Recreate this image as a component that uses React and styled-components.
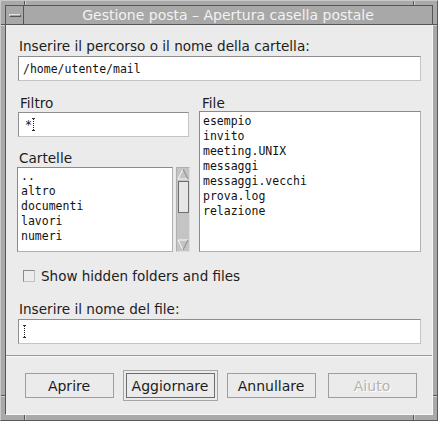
import React from "react";
import styled, { createGlobalStyle, css } from "styled-components";

const GlobalStyle = createGlobalStyle`
  html, body { margin: 0; padding: 0; background: #a9a9a9; }
  body { font-family: "DejaVu Sans", "Liberation Sans", sans-serif; }
  * { box-sizing: border-box; }
`;

const DARK = "#565656";
const LIGHT = "#d2d2d2";

const Window = styled.div`
  position: relative;
  width: 438px;
  height: 421px;
  background: #a9a9a9;
  border: 1px solid;
  border-color: #c8c8c8 #5a5a5a #5a5a5a #c8c8c8;
  padding: 4px 4px 5px 4px;
  display: flex;
  flex-direction: column;
`;

const Tick = styled.span`
  position: absolute;
  background: ${DARK};
  box-shadow: ${(p) => (p.$vertical ? `1px 0 0 ${LIGHT}` : `0 1px 0 ${LIGHT}`)};
  ${(p) =>
    p.$vertical
      ? css`width: 1px; height: ${p.$len}px;`
      : css`height: 1px; width: ${p.$len}px;`}
`;

const TitleBar = styled.div`
  display: flex;
  height: 20px;
  border: 1px solid ${DARK};
  background: #a8a8a8;
`;

const MenuButton = styled.div`
  width: 18px;
  border-right: 1px solid ${DARK};
  display: flex;
  align-items: center;
  justify-content: center;
`;

const MenuBar = styled.span`
  display: block;
  width: 12px;
  height: 3px;
  background: #a4a4a4;
  border: 1px solid;
  border-color: #e2e2e2 ${DARK} ${DARK} #e2e2e2;
  margin-top: 1px;
`;

const Title = styled.div`
  flex: 1;
  text-align: center;
  color: #f2f2f2;
  font-size: 14px;
  line-height: 18px;
  white-space: nowrap;
`;

const Content = styled.div`
  flex: 1;
  display: flex;
  flex-direction: column;
  background: #ebebeb;
  border-left: 1px solid ${DARK};
  border-right: 1px solid #f6f6f6;
  border-bottom: 1px solid #f6f6f6;
`;

const Body = styled.div`
  display: flex;
  flex-direction: column;
  padding: 13px 11px 0 12px;
`;

const Label = styled.div`
  font-size: 13.6px;
  line-height: 16px;
  color: #1c1c1c;
  padding-left: ${(p) => p.$indent ?? 1}px;
  margin-top: ${(p) => p.$mt ?? 0}px;
  margin-bottom: ${(p) => p.$mb ?? 2}px;
  white-space: nowrap;
`;

const Field = styled.div`
  height: 25px;
  width: ${(p) => (p.$w ? `${p.$w}px` : "100%")};
  background: #ffffff;
  border: 1px solid;
  border-color: #8e8e8e #c4c4c4 #c4c4c4 #8e8e8e;
  padding: 0 0 0 ${(p) => p.$pl ?? 4}px;
  display: flex;
  align-items: center;
  font-family: "DejaVu Sans Mono", "Liberation Mono", monospace;
  font-size: 11.5px;
  color: #111;
  white-space: pre;
`;

const Caret = styled.span`
  position: relative;
  display: inline-block;
  width: 3px;
  height: 13px;
  margin-left: ${(p) => p.$ml ?? 0}px;
  &::before {
    content: "";
    position: absolute;
    left: 1px;
    top: 1px;
    bottom: 1px;
    border-left: 1px dotted #222;
  }
  &::after {
    content: "";
    position: absolute;
    left: 0;
    right: 0;
    top: 0;
    bottom: 0;
    border-top: 1px solid #333;
    border-bottom: 1px solid #333;
  }
`;

const Columns = styled.div`
  display: grid;
  grid-template-columns: 172px 222px;
  column-gap: 9px;
  margin-top: 14px;
`;

const Column = styled.div`
  display: flex;
  flex-direction: column;
`;

const ListRow = styled.div`
  display: flex;
  gap: 3px;
  margin-left: -1px;
`;

const List = styled.div`
  flex: 1;
  height: ${(p) => p.$h}px;
  background: #ffffff;
  border: 1px solid;
  border-color: #8a8a8a #b0b0b0 #b0b0b0 #8a8a8a;
  padding: ${(p) => p.$pt}px 0 0 3px;
  font-family: "DejaVu Sans Mono", "Liberation Mono", monospace;
  font-size: 11.5px;
  line-height: 15px;
  color: #111;
  overflow: hidden;
`;

const Item = styled.div`
  white-space: pre;
`;

const Scrollbar = styled.div`
  width: 14px;
  height: 85px;
  background: #c4c4c4;
  border: 1px solid;
  border-color: #b0b0b0 #dedede #dedede #b0b0b0;
  display: flex;
  flex-direction: column;
  align-items: center;
`;

const Arrow = styled.svg`
  display: block;
  flex: none;
`;

const Thumb = styled.div`
  width: 11px;
  height: 32px;
  margin-top: 1px;
  background: #e6e6e6;
  border: 1px solid #6e6e6e;
`;

const Trough = styled.div`
  flex: 1;
`;

const CheckRow = styled.div`
  display: flex;
  align-items: center;
  gap: 6px;
  margin-top: 16px;
  padding-left: 5px;
  height: 16px;
`;

const CheckBox = styled.span`
  width: 12px;
  height: 12px;
  background: #ececec;
  border: 1px solid;
  border-color: #8a8a8a #c0c0c0 #c0c0c0 #8a8a8a;
`;

const CheckLabel = styled.span`
  font-size: 13.5px;
  line-height: 16px;
  color: #1c1c1c;
`;

const Separator = styled.div`
  margin-top: 11px;
  height: 2px;
  border-top: 1px solid #9a9a9a;
  border-bottom: 1px solid #f8f8f8;
`;

const ButtonBar = styled.div`
  flex: 1;
  display: flex;
  justify-content: center;
  align-items: flex-start;
  gap: 12px;
  padding-top: 16px;
  padding-left: 3px;
`;

const DefaultRing = styled.div`
  margin: -3px;
  padding: 2px;
  border: 1px solid #a6a6a6;
`;

const Button = styled.button`
  width: 89px;
  height: 25px;
  margin: 0;
  padding: 0;
  background: #ebebeb;
  border: 1px solid ${(p) => (p.$default ? "#6c6c6c" : "#9e9e9e")};
  font-family: "DejaVu Sans", "Liberation Sans", sans-serif;
  font-size: 14px;
  color: ${(p) => (p.disabled ? "#b4b4b4" : "#1c1c1c")};
  text-shadow: ${(p) => (p.disabled ? "1px 1px 0 #ffffff" : "none")};
  cursor: default;
`;

const UpArrow = () => (
  <Arrow width="12" height="12" viewBox="0 0 12 12">
    <polygon points="1,11 6,1 11,11" fill="#c4c4c4" />
    <polyline points="1,11 6,1" fill="none" stroke="#fafafa" strokeWidth="1" />
    <polyline points="1,11 11,11" fill="none" stroke="#fafafa" strokeWidth="1" />
    <polyline points="6,1 11,11" fill="none" stroke="#8a8a8a" strokeWidth="1" />
  </Arrow>
);

const DownArrow = () => (
  <Arrow width="12" height="12" viewBox="0 0 12 12">
    <polygon points="1,1 11,1 6,11" fill="#c4c4c4" />
    <polyline points="1,1 11,1" fill="none" stroke="#fafafa" strokeWidth="1" />
    <polyline points="1,1 6,11" fill="none" stroke="#fafafa" strokeWidth="1" />
    <polyline points="11,1 6,11" fill="none" stroke="#8a8a8a" strokeWidth="1" />
  </Arrow>
);

const folders = ["..", "altro", "documenti", "lavori", "numeri"];
const files = [
  "esempio",
  "invito",
  "meeting.UNIX",
  "messaggi",
  "messaggi.vecchi",
  "prova.log",
  "relazione",
];

const ticks = [
  { v: true, len: 4, top: 0, left: 23 },
  { v: true, len: 4, top: 0, left: 412 },
  { v: true, len: 5, top: 414, left: 23 },
  { v: true, len: 5, top: 414, left: 412 },
  { v: false, len: 4, top: 23, left: 0 },
  { v: false, len: 4, top: 23, left: 432 },
  { v: false, len: 4, top: 394, left: 0 },
  { v: false, len: 4, top: 394, left: 432 },
];

export default function App() {
  return (
    <>
      <GlobalStyle />
      <Window>
        {ticks.map((t, i) => (
          <Tick key={i} $vertical={t.v} $len={t.len} style={{ top: t.top, left: t.left }} />
        ))}
        <TitleBar>
          <MenuButton>
            <MenuBar />
          </MenuButton>
          <Title>Gestione posta – Apertura casella postale</Title>
        </TitleBar>
        <Content>
          <Body>
            <Label>Inserire il percorso o il nome della cartella:</Label>
            <Field>/home/utente/mail</Field>
            <Columns>
              <Column>
                <Label $indent={2} $mb={1}>Filtro</Label>
                <Field $w={171} $pl={6}>
                  *<Caret />
                </Field>
                <Label $indent={1} $mt={13} $mb={1}>Cartelle</Label>
                <ListRow>
                  <List $h={85} $pt={1}>
                    {folders.map((f) => (
                      <Item key={f}>{f}</Item>
                    ))}
                  </List>
                  <Scrollbar>
                    <UpArrow />
                    <Thumb />
                    <Trough />
                    <DownArrow />
                  </Scrollbar>
                </ListRow>
              </Column>
              <Column>
                <Label $indent={3} $mb={0}>File</Label>
                <List $h={141} $pt={2}>
                  {files.map((f) => (
                    <Item key={f}>{f}</Item>
                  ))}
                </List>
              </Column>
            </Columns>
            <CheckRow>
              <CheckBox />
              <CheckLabel>Show hidden folders and files</CheckLabel>
            </CheckRow>
            <Label $mt={17} $mb={2}>Inserire il nome del file:</Label>
            <Field>
              <Caret />
            </Field>
          </Body>
          <Separator />
          <ButtonBar>
            <Button>Aprire</Button>
            <DefaultRing>
              <Button $default>Aggiornare</Button>
            </DefaultRing>
            <Button>Annullare</Button>
            <Button disabled>Aiuto</Button>
          </ButtonBar>
        </Content>
      </Window>
    </>
  );
}
